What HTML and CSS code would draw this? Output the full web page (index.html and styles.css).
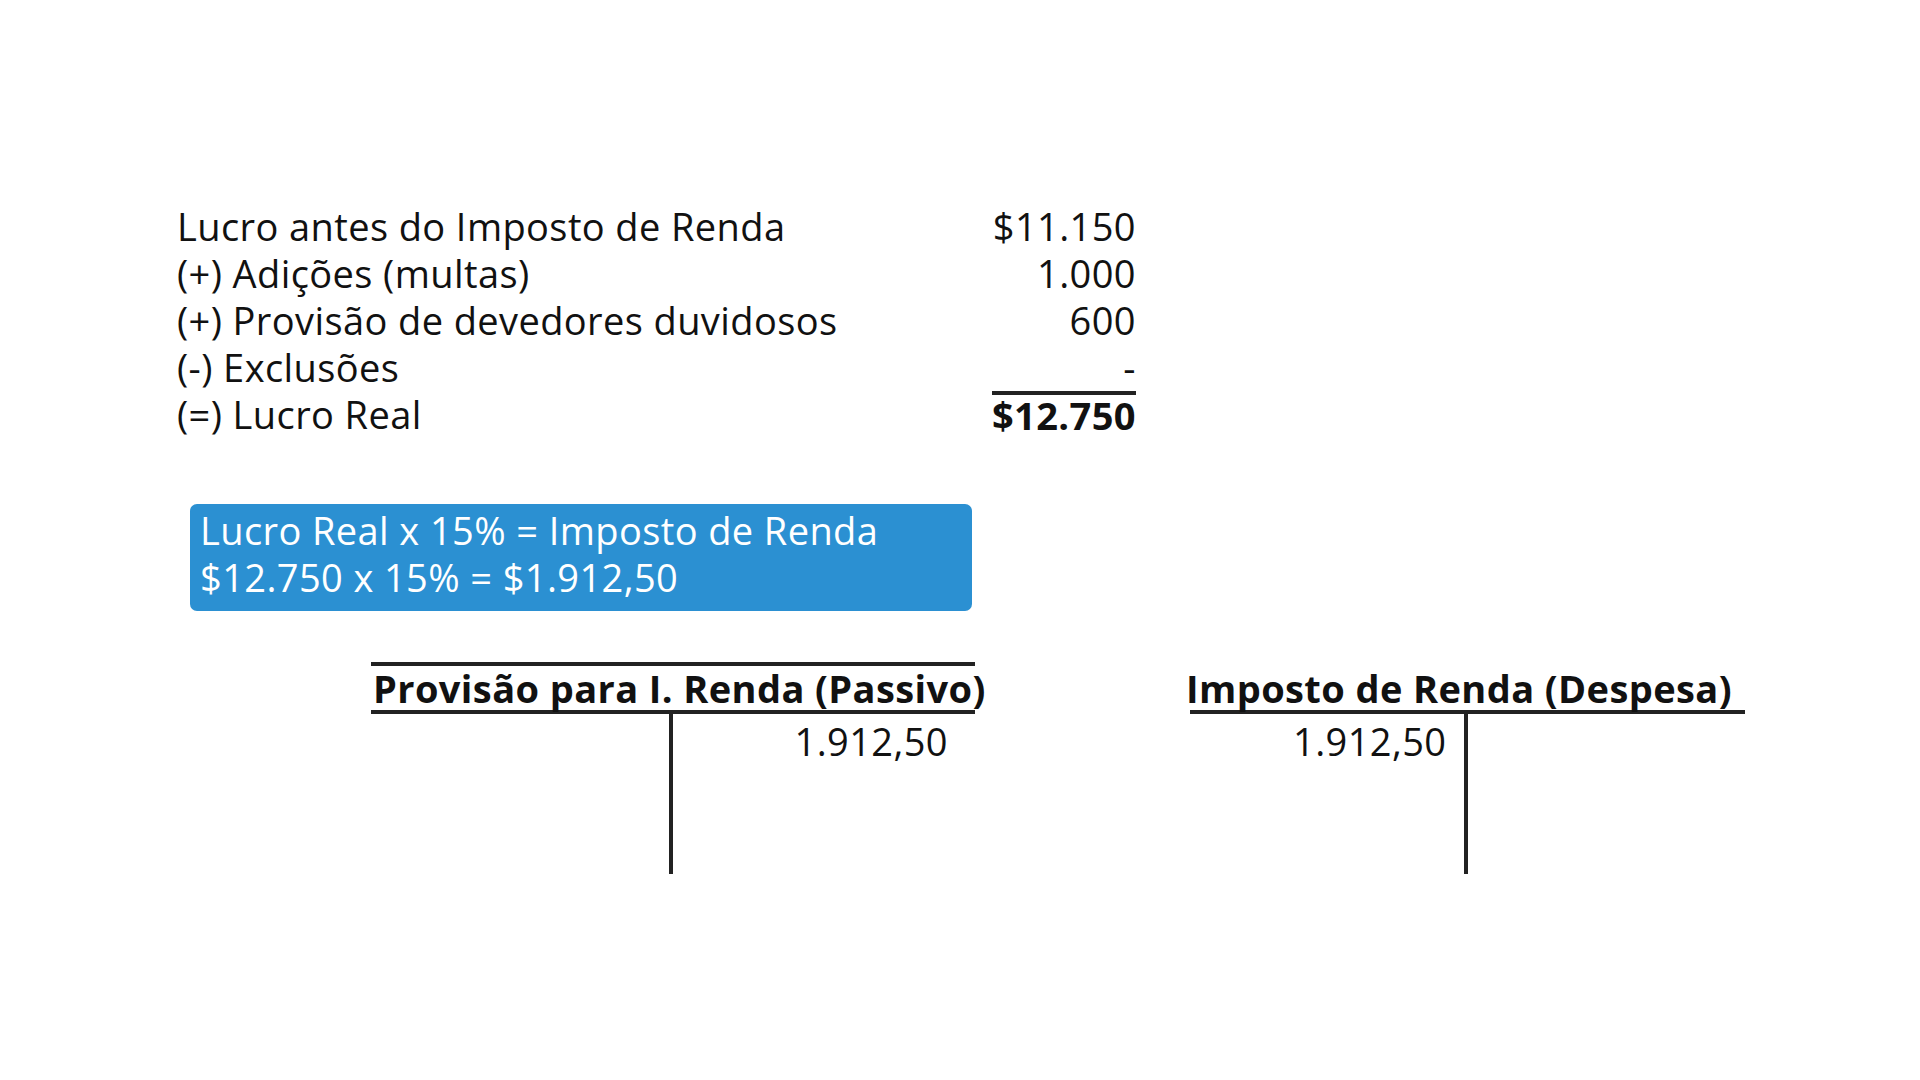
FILE: index.html
```html
<!DOCTYPE html>
<html>

<head>
    <title>Lucro Real</title>
    <meta charset="UTF-8" />
    <link rel="stylesheet" href="styles.css">
</head>

<body>
    <div class="page">
        <div class="summary">
            <span>Lucro antes do Imposto de Renda</span>
            <span class="value">$11.150</span>
            <span>(+) Adições (multas)</span>
            <span class="value">1.000</span>
            <span>(+) Provisão de devedores duvidosos</span>
            <span class="value">600</span>
            <span>(-) Exclusões</span>
            <span class="value">-</span>
            <span>(=) Lucro Real</span>
            <span class="value total">$12.750</span>
        </div>

        <div class="formula">
            <p>Lucro Real x 15% = Imposto de Renda</p>
            <p>$12.750 x 15% = $1.912,50</p>
        </div>

        <div class="t-accounts">
            <div class="t-account passivo">
                <h3>Provisão para I. Renda (Passivo)</h3>
                <div class="t-body">
                    <div class="debit"></div>
                    <div class="credit">1.912,50</div>
                </div>
            </div>
            <div class="t-account despesa">
                <h3>Imposto de Renda (Despesa)</h3>
                <div class="t-body">
                    <div class="debit">1.912,50</div>
                    <div class="credit"></div>
                </div>
            </div>
        </div>
    </div>
</body>

</html>
```

FILE: styles.css
```css
body {
    font-family: "Open Sans", "Liberation Sans", sans-serif;
    margin: 0;
    padding: 0;
    background-color: white;
    color: #111;
    letter-spacing: 0.4px;
}

.page {
    width: 1920px;
    height: 1080px;
    padding-top: 203px;
    box-sizing: border-box;
}

.summary {
    display: grid;
    grid-template-columns: 1fr auto;
    width: 959px;
    margin-left: 177px;
    font-size: 38px;
    line-height: 47px;
}

.summary .value {
    text-align: right;
}

.summary .total {
    font-weight: bold;
    border-top: 4px solid #222;
    line-height: 41px;
}

.formula {
    width: 762px;
    margin: 66px 0 0 190px;
    padding: 3px 10px 10px;
    background-color: #2b90d2;
    border-radius: 7px;
    color: white;
    font-size: 38px;
    line-height: 47px;
}

.formula p {
    margin: 0;
}

.t-accounts {
    display: flex;
    gap: 215px;
    margin: 51px 0 0 371px;
}

.t-account h3 {
    margin: 0;
    font-size: 38px;
    line-height: 44px;
    white-space: nowrap;
    border-top: 4px solid transparent;
    border-bottom: 4px solid #222;
}

.passivo {
    width: 604px;
}

.passivo h3 {
    border-top-color: #222;
    padding-left: 2px;
}

.despesa {
    width: 555px;
}

.despesa h3 {
    text-indent: -4px;
}

.t-body {
    display: grid;
    grid-template-columns: 1fr 1fr;
    height: 160px;
    font-size: 38px;
    line-height: 47px;
}

.t-body div {
    padding-top: 4px;
    text-align: right;
}

.t-body .debit {
    border-right: 4px solid #222;
}

.passivo .credit {
    padding-right: 27px;
}

.despesa .debit {
    padding-right: 17px;
}
```
